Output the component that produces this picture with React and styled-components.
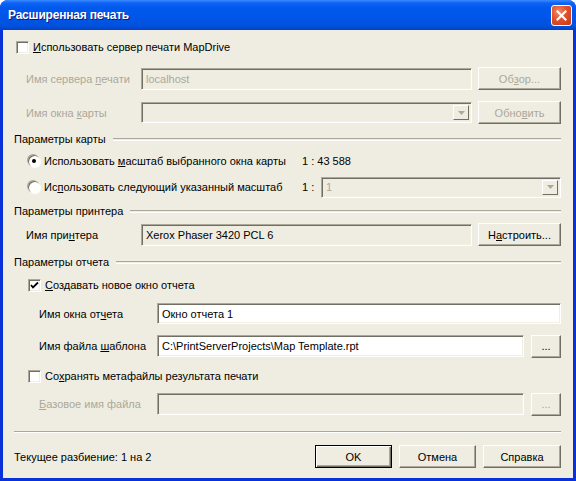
import React from 'react';
import styled, { createGlobalStyle } from 'styled-components';

const GlobalStyle = createGlobalStyle`
  html, body { margin: 0; padding: 0; background: #fff; }
  body { font-family: "Liberation Sans", Arial, sans-serif; font-size: 11px; color: #000; }
`;

const face = '#EFEDE1';
const dis = '#ACA899';

const Window = styled.div`
  width: 576px;
  height: 481px;
  box-sizing: border-box;
  display: flex;
  flex-direction: column;
  background: #0831D9;
  border-radius: 8px 8px 0 0;
  overflow: hidden;
`;

const TitleBar = styled.div`
  height: 30px;
  flex: none;
  display: flex;
  align-items: center;
  justify-content: space-between;
  padding: 0 4px 0 8px;
  background: linear-gradient(to bottom, #3A8CFF 0px, #0F62F5 3px, #0058EE 8px, #0056E8 18px, #0052DC 26px, #0440C8 30px);
`;

const Title = styled.div`
  color: #fff;
  font-weight: bold;
  font-size: 12px;
  letter-spacing: -0.2px;
  text-shadow: 1px 1px 0 #0A1882;
`;

const CloseButton = styled.div`
  width: 19px;
  height: 19px;
  border: 1px solid #fff;
  border-radius: 3px;
  background: radial-gradient(circle at 35% 30%, #F08A6A 0%, #E0502C 45%, #C8381A 100%);
  display: flex;
  align-items: center;
  justify-content: center;
`;

const Client = styled.div`
  flex: 1;
  margin: 0 3px 3px 3px;
  background: ${face};
  padding: 0 12px 0 11px;
  display: flex;
  flex-direction: column;
`;

const Row = styled.div`
  display: flex;
  align-items: center;
  flex: none;
  height: ${p => p.$h || 14}px;
  margin-top: ${p => p.$mt || 0}px;
  padding-left: ${p => p.$indent || 0}px;
  gap: ${p => p.$gap || 0}px;
`;

const Label = styled.div`
  width: ${p => p.$w}px;
  flex: none;
  color: ${p => (p.$disabled ? dis : '#000')};
  white-space: nowrap;
`;

const Text = styled.span`
  color: ${p => (p.$disabled ? dis : '#000')};
  white-space: nowrap;
`;

const Field = styled.div`
  flex: 1;
  height: ${p => p.$h || 21}px;
  box-sizing: border-box;
  border-top: 1px solid #ACA899;
  border-left: 1px solid #ACA899;
  border-bottom: 1px solid #fff;
  border-right: 1px solid #fff;
  box-shadow: inset 1px 1px 0 #716F64, inset -1px -1px 0 #F1EFE2;
  background: ${p => (p.$white ? '#fff' : face)};
  color: ${p => (p.$disabled ? dis : '#000')};
  display: flex;
  align-items: center;
  justify-content: space-between;
  padding: 0 2px 0 4px;
  white-space: nowrap;
`;

const ArrowBox = styled.div`
  width: 16px;
  height: 15px;
  box-sizing: border-box;
  border-top: 1px solid #fff;
  border-left: 1px solid #fff;
  border-right: 1px solid #716F64;
  border-bottom: 1px solid #716F64;
  background: ${face};
  display: flex;
  align-items: center;
  justify-content: center;
`;

const Button = styled.div`
  width: ${p => p.$w || 83}px;
  height: 23px;
  flex: none;
  box-sizing: border-box;
  display: flex;
  align-items: center;
  justify-content: center;
  background: ${face};
  color: ${p => (p.$disabled ? dis : '#000')};
  border-top: 1px solid ${p => (p.$default ? '#000' : '#fff')};
  border-left: 1px solid ${p => (p.$default ? '#000' : '#fff')};
  border-right: 1px solid ${p => (p.$default ? '#000' : '#716F64')};
  border-bottom: 1px solid ${p => (p.$default ? '#000' : '#716F64')};
  box-shadow: ${p =>
    p.$default
      ? 'inset 1px 1px 0 #fff, inset -1px -1px 0 #716F64, inset -2px -2px 0 #ACA899'
      : 'inset -1px -1px 0 #ACA899'};
`;

const Box = styled.div`
  width: 13px;
  height: 13px;
  flex: none;
  box-sizing: border-box;
  background: #fff;
  border-top: 1px solid #ACA899;
  border-left: 1px solid #ACA899;
  border-right: 1px solid #fff;
  border-bottom: 1px solid #fff;
  box-shadow: inset 1px 1px 0 #716F64, inset -1px -1px 0 #F1EFE2;
  display: flex;
  align-items: center;
  justify-content: center;
`;

const Radio = styled.div`
  width: 12px;
  height: 12px;
  flex: none;
  border-radius: 50%;
  background: #fff;
  box-shadow: -1px -1px 0 #ACA899, 1px 1px 0 #fff, inset 1px 1px 0 #716F64;
  display: flex;
  align-items: center;
  justify-content: center;
  &::after {
    content: '';
    display: ${p => (p.$checked ? 'block' : 'none')};
    width: 4px;
    height: 4px;
    border-radius: 50%;
    background: #000;
  }
`;

const Header = styled.div`
  display: flex;
  align-items: center;
  gap: 7px;
  height: 14px;
  flex: none;
  margin-top: ${p => p.$mt}px;
  white-space: nowrap;
  &::after {
    content: '';
    flex: 1;
    height: 1px;
    border-top: 1px solid #ACA899;
    border-bottom: 1px solid #fff;
  }
`;

const Separator = styled.div`
  flex: none;
  margin-top: ${p => p.$mt}px;
  height: 0;
  border-top: 1px solid #ACA899;
  border-bottom: 1px solid #fff;
`;

const Spacer = styled.div`
  flex: 1;
`;

const Scale = styled.div`
  width: 254px;
  flex: none;
  white-space: nowrap;
`;

const ScaleValue = styled.div`
  width: 15px;
  flex: none;
`;

const Arrow = ({ disabled }) => (
  <ArrowBox>
    <svg width="7" height="4" viewBox="0 0 7 4">
      <polygon points="0,0 7,0 3.5,4" fill={disabled ? dis : '#000'} />
    </svg>
  </ArrowBox>
);

const Check = ({ checked }) => (
  <Box>
    {checked && (
      <svg width="9" height="9" viewBox="0 0 9 9">
        <polyline points="1,4 3,6.5 8,1.5" fill="none" stroke="#000" strokeWidth="1.8" />
      </svg>
    )}
  </Box>
);

export default function App() {
  return (
    <>
      <GlobalStyle />
      <Window>
        <TitleBar>
          <Title>Расширенная печать</Title>
          <CloseButton>
            <svg width="11" height="11" viewBox="0 0 11 11">
              <path d="M1.5 1.5 L9.5 9.5 M9.5 1.5 L1.5 9.5" stroke="#fff" strokeWidth="2.2" strokeLinecap="square" />
            </svg>
          </CloseButton>
        </TitleBar>
        <Client>
          <Row $mt={10} $indent={2} $gap={4}>
            <Check />
            <Text><u>И</u>спользовать сервер печати MapDrive</Text>
          </Row>
          <Row $mt={13} $h={23} $indent={12} $gap={6}>
            <Label $w={109} $disabled>Имя сервера <u>п</u>ечати</Label>
            <Field $h={22} $disabled>localhost</Field>
            <Button $disabled>Об<u>з</u>ор...</Button>
          </Row>
          <Row $mt={11} $h={23} $indent={12} $gap={6}>
            <Label $w={109} $disabled>Имя окна <u>к</u>арты</Label>
            <Field $h={21} $disabled><span /><Arrow disabled /></Field>
            <Button $disabled>Обно<u>в</u>ить</Button>
          </Row>
          <Header $mt={8}>Параметры карты</Header>
          <Row $mt={8} $indent={14} $gap={4}>
            <Radio $checked />
            <Scale>Использовать <u>м</u>асштаб выбранного окна карты</Scale>
            <Text>1 : 43 588</Text>
          </Row>
          <Row $mt={8} $h={22} $indent={14} $gap={4}>
            <Radio />
            <Scale>Ис<u>п</u>ользовать следующий указанный масштаб</Scale>
            <ScaleValue>1 :</ScaleValue>
            <Field $h={21} $disabled>1<Arrow disabled /></Field>
          </Row>
          <Header $mt={6}>Параметры принтера</Header>
          <Row $mt={5} $h={23} $indent={12} $gap={6}>
            <Label $w={109}>Имя при<u>н</u>тера</Label>
            <Field $h={22}>Xerox Phaser 3420 PCL 6</Field>
            <Button>Н<u>а</u>строить...</Button>
          </Row>
          <Header $mt={9}>Параметры отчета</Header>
          <Row $mt={9} $indent={14} $gap={4}>
            <Check checked />
            <Text><u>С</u>оздавать новое окно отчета</Text>
          </Row>
          <Row $mt={11} $h={21} $indent={25}>
            <Label $w={118}>Имя окна от<u>ч</u>ета</Label>
            <Field $h={21} $white>Окно отчета 1</Field>
          </Row>
          <Row $mt={11} $h={22} $indent={25} $gap={7}>
            <Label $w={111}>Имя файла <u>ш</u>аблона</Label>
            <Field $h={22} $white>C:\PrintServerProjects\Map Template.rpt</Field>
            <Button $w={30}>...</Button>
          </Row>
          <Row $mt={12} $indent={14} $gap={4}>
            <Check />
            <Text>Со<u>х</u>ранять метафайлы результата печати</Text>
          </Row>
          <Row $mt={10} $h={22} $indent={25} $gap={7}>
            <Label $w={111} $disabled><u>Б</u>азовое имя файла</Label>
            <Field $h={22} $disabled />
            <Button $w={30} $disabled>...</Button>
          </Row>
          <Separator $mt={16} />
          <Row $mt={12} $h={23} $gap={7}>
            <Text>Текущее разбиение: 1 на 2</Text>
            <Spacer />
            <Button $w={77} $default>OK</Button>
            <Button $w={77}>Отмена</Button>
            <Button $w={78}>Справка</Button>
          </Row>
        </Client>
      </Window>
    </>
  );
}
